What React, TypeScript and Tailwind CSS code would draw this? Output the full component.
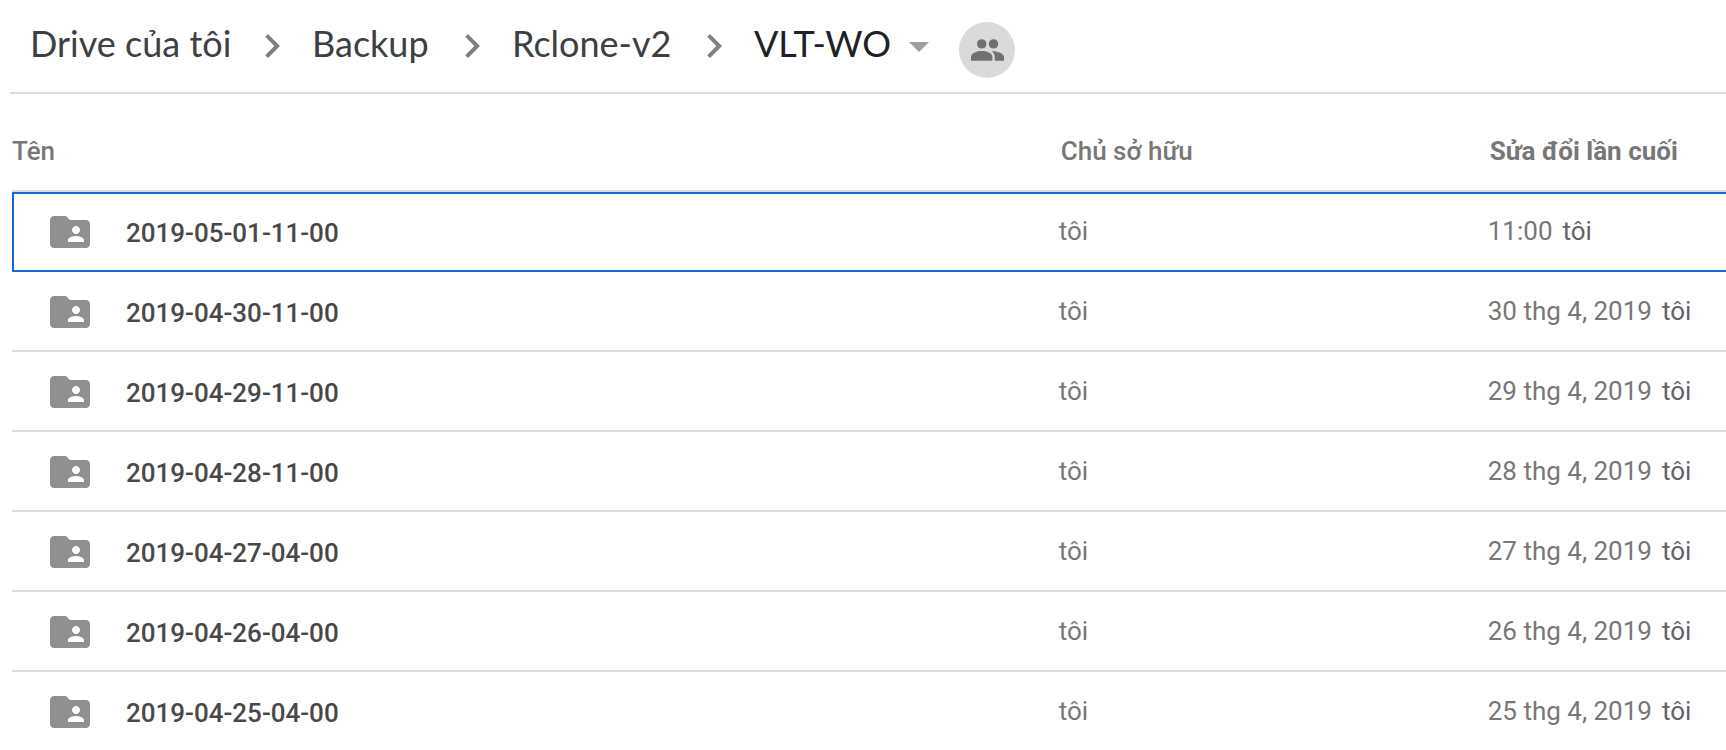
import { MdArrowDropDown, MdChevronRight, MdFolderShared } from "react-icons/md";

type Folder = { name: string; modified: string };

const parents = [
  { label: "Drive của tôi", width: "w-[218px]" },
  { label: "Backup", width: "w-[136px]" },
  { label: "Rclone-v2", width: "w-[178px]" },
];

const folders: Folder[] = [
  { name: "2019-05-01-11-00", modified: "11:00" },
  { name: "2019-04-30-11-00", modified: "30 thg 4, 2019" },
  { name: "2019-04-29-11-00", modified: "29 thg 4, 2019" },
  { name: "2019-04-28-11-00", modified: "28 thg 4, 2019" },
  { name: "2019-04-27-04-00", modified: "27 thg 4, 2019" },
  { name: "2019-04-26-04-00", modified: "26 thg 4, 2019" },
  { name: "2019-04-25-04-00", modified: "25 thg 4, 2019" },
];

function PeopleIcon() {
  return (
    <svg viewBox="0 0 33 22" className="h-[22px] w-[33px]" fill="#707070" aria-hidden="true">
      <circle cx="10.700" cy="4.900" r="4.700" />
      <circle cx="22.500" cy="4.900" r="4.700" />
      <path d="M0 21.700v-3.700C0 14 6.500 12.100 10.700 12.100s10.700 1.900 10.700 5.900v3.700z" />
      <path d="M20.600 12.200c4.900-.5 12.400 1.800 12.400 5.800v3.700h-9.200v-3.700c0-2.500-1.300-4.500-3.200-5.800z" />
    </svg>
  );
}

function Breadcrumbs() {
  return (
    <nav
      aria-label="Breadcrumb"
      className="ml-[10px] flex h-[94px] items-center border-b-2 border-[#dadce0] pl-5 font-['Lato','Open_Sans',sans-serif] text-[36px] leading-[44px] text-[#3c4043]"
    >
      {parents.map((parent) => (
        <div key={parent.label} className="flex items-center">
          <a href="#" className={`${parent.width} pb-1.5 whitespace-nowrap`}>
            {parent.label}
          </a>
          <MdChevronRight className="mr-4 size-12 text-[#808080]" />
        </div>
      ))}
      <button type="button" className="flex items-center gap-1 text-[#202124]">
        <span className="pb-1.5">VLT-WO</span>
        <MdArrowDropDown className="size-12 text-[#9aa0a6]" />
      </button>
      <button
        type="button"
        aria-label="Chia sẻ"
        className="mt-2 ml-4 flex size-14 items-center justify-center rounded-full bg-[#dadada]"
      >
        <PeopleIcon />
      </button>
    </nav>
  );
}

function FolderRow({ folder, selected }: { folder: Folder; selected: boolean }) {
  return (
    <tr
      className={
        selected
          ? "h-20 outline-2 -outline-offset-2 outline-[#1967d2] *:border-b-2 *:border-transparent"
          : "h-20 *:border-b-2 *:border-[#dadce0] last:*:border-transparent"
      }
    >
      <td className="p-0 pt-0.5">
        <div className="flex items-center pl-[34px] font-medium text-[#484848]">
          <MdFolderShared className="mr-8 size-12 text-[#8f8f8f]" />
          <span className="pt-0.5">{folder.name}</span>
        </div>
      </td>
      <td className="p-0">tôi</td>
      <td className="p-0 whitespace-nowrap">
        {folder.modified}
        <span className="ml-[10px] text-[#5f6368]">tôi</span>
      </td>
    </tr>
  );
}

export default function App() {
  return (
    <main className="overflow-hidden bg-white font-['Roboto',sans-serif] text-[26px] leading-8 text-[#777777]">
      <Breadcrumbs />
      {/* the selected row's outline runs past the right edge */}
      <div className="-mr-0.5 pl-3">
        <table className="w-full table-fixed border-separate border-spacing-0 text-left">
          <thead>
            <tr className="h-[98px] *:border-b-2 *:border-[#dadce0]">
              <th className="w-[61%] p-0 pt-[18px] font-medium">Tên</th>
              <th className="w-[25%] p-0 pt-[18px] pl-0.5 font-medium">Chủ sở hữu</th>
              <th className="p-0 pt-[18px] pl-0.5 font-bold whitespace-nowrap">Sửa đổi lần cuối</th>
            </tr>
          </thead>
          <tbody>
            {folders.map((folder, index) => (
              <FolderRow key={folder.name} folder={folder} selected={index === 0} />
            ))}
          </tbody>
        </table>
      </div>
    </main>
  );
}
